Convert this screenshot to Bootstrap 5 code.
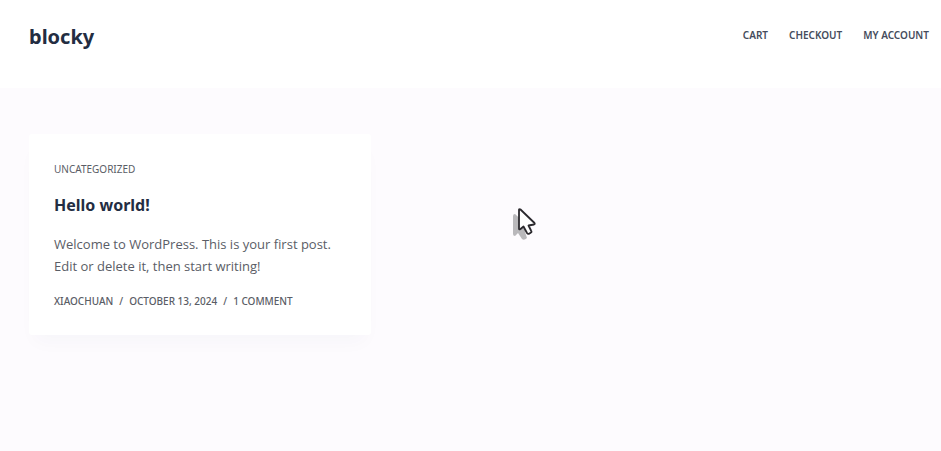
<!DOCTYPE html>
<html lang="en">
<head>
<meta charset="utf-8">
<meta name="viewport" content="width=device-width, initial-scale=1">
<title>blocky</title>
<link href="https://cdn.jsdelivr.net/npm/bootstrap@5.3.0/dist/css/bootstrap.min.css" rel="stylesheet">
<style>
  body { font-family: "Segoe UI", "Noto Sans", "Open Sans", sans-serif; background: #fdfbfe; color: #5a5d66; }
  a { color: inherit; text-decoration: none; }
  a:hover { color: #2872fa; }
  .site-header { background: #fff; min-height: 88px; padding: 20px 12px 0 29px; }
  .site-name { font-size: 20px; line-height: 34px; font-weight: 700; color: #232d42; margin: 0; padding: 0; }
  .site-menu { gap: 21px; font-size: 10px; line-height: 30px; font-weight: 600; color: #454c5c; }
  .posts { padding: 46px 12px 46px 29px; }
  .post-grid { display: grid; grid-template-columns: minmax(280px, 38%); }
  .post-card { --bs-card-border-width: 0; --bs-card-border-radius: 3px; --bs-card-bg: #fff; background: #fff; padding: 24px 25px; box-shadow: 0 12px 18px -6px rgba(34, 56, 101, .03); }
  .post-category { font-size: 10px; line-height: 22px; }
  .post-title { font-size: 16px; line-height: 24px; font-weight: 700; color: #232d42; margin: 13px 0 16px; }
  .post-excerpt { font-family: "Segoe UI", "Open Sans", sans-serif; font-size: 13px; line-height: 22px; margin: 0 0 14px; }
  .post-meta { font-size: 10px; line-height: 20px; font-weight: 500; gap: 6px; }
  .pointer { position: absolute; left: 509px; top: 205px; width: 30px; height: 38px; pointer-events: none; }
</style>
<script defer src="https://cdn.jsdelivr.net/npm/bootstrap@5.3.0/dist/js/bootstrap.bundle.min.js"></script>
</head>
<body>
<header class="site-header d-flex justify-content-between align-items-start">
  <h1 class="site-name"><a href="#">blocky</a></h1>
  <nav aria-label="Main">
    <ul class="site-menu list-unstyled d-flex text-uppercase mb-0">
      <li><a href="#">Cart</a></li>
      <li><a href="#">Checkout</a></li>
      <li><a href="#">My Account</a></li>
    </ul>
  </nav>
</header>
<main class="posts">
  <div class="post-grid">
    <article class="card post-card">
      <div class="post-category text-uppercase"><a href="#">Uncategorized</a></div>
      <h2 class="post-title"><a href="#">Hello world!</a></h2>
      <p class="post-excerpt">Welcome to WordPress. This is your first post. Edit or delete it, then start writing!</p>
      <div class="post-meta d-flex flex-wrap text-uppercase">
        <a href="#">xiaochuan</a><span>/</span><time datetime="2024-10-13">October 13, 2024</time><span>/</span><a href="#">1 Comment</a>
      </div>
    </article>
  </div>
</main>
<svg class="pointer" viewBox="0 0 30 38" aria-hidden="true">
  <path d="M6 9Q4 9 4 11V29Q4 31 6 31L9 28L13 34Q15 36 18 33L16 27L18 20Z" fill="#b9b8bb"/>
  <path d="M10.500 4.200Q10 4 10 5V23.500Q10 25 11.500 24L14.500 21.500L18 28Q19 29.500 20.500 28.500L22 27.500Q23 27 22 25.500L19.500 20.500L25 19.500Q26.500 19 25 17.500L11.500 4.500Q11 4 10.500 4.200Z" fill="#fff" stroke="#2b292e" stroke-width="1.800" stroke-linejoin="round"/>
</svg>
</body>
</html>
